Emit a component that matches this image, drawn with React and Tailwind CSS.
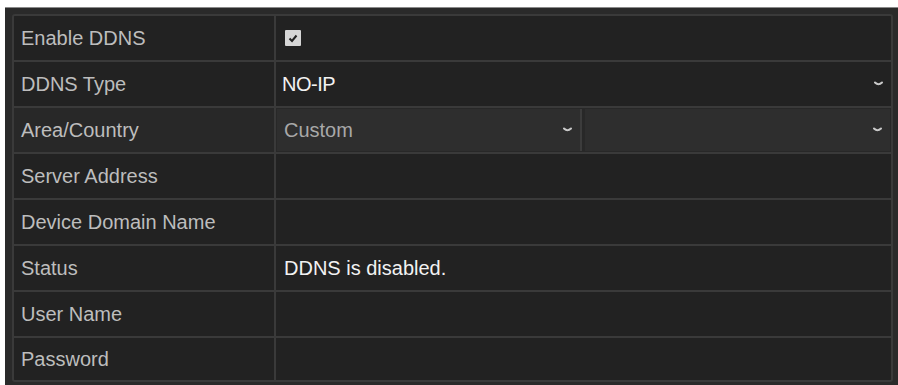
import React from "react";

function Chevron() {
    return (
        <svg width="9" height="6" viewBox="0 0 9 6" className="shrink-0">
            <path d="M1 1.5 Q4.5 5 8 1.5" stroke="#c8c8c8" strokeWidth="2" fill="none" strokeLinecap="round" />
        </svg>
    );
}

function Row({ label, children, last, shade }) {
    return (
        <div
            className={`flex ${last ? "h-[42px]" : "h-[46px] border-b-2 border-[#3a3a3a]"} ${shade ? "bg-[#282828]" : "bg-[#222222]"}`}
        >
            <div className="w-[262px] shrink-0 border-r-2 border-[#3a3a3a] flex items-center pl-[7px] text-[#bdbdbd]">
                {label}
            </div>
            <div className="flex-1 flex items-center">{children}</div>
        </div>
    );
}

export default function App() {
    return (
        <div
            className="w-[898px] h-[385px] bg-white pt-[7px] pl-[5px] overflow-hidden"
            style={{ fontFamily: '"Liberation Sans", Arial, sans-serif' }}
        >
            <div className="h-full bg-[#2a2a2a] border-t border-[#8a8a8a] pt-[6px] pl-[7px] pr-[5px]">
                <div className="border-2 border-[#3a3a3a] rounded-[3px] overflow-hidden text-[20px] leading-none">
                    <Row label="Enable DDNS">
                        <div className="ml-[9px] w-[16px] h-[16px] bg-[#d6d6d6] rounded-[1px] flex items-center justify-center">
                            <svg width="10" height="9" viewBox="0 0 10 9">
                                <path d="M1.5 4.5 L4 7 L8.5 1.5" stroke="#222" strokeWidth="2" fill="none" />
                            </svg>
                        </div>
                    </Row>
                    <Row label="DDNS Type">
                        <div className="flex-1 flex items-center justify-between pl-[6px] pr-[8px] text-[#f2f2f2]">
                            <span className="tracking-[-0.5px]">NO-IP</span>
                            <Chevron />
                        </div>
                    </Row>
                    <Row label="Area/Country" shade>
                        <div className="flex-1 h-full flex gap-[3px] py-[1px] pl-[1px] pr-[1px]">
                            <div className="w-[305px] h-full bg-[#2e2e2e] border-r-2 border-[#3c3c3c] flex items-center justify-between pl-[7px] pr-[8px] text-[#a8a8a8]">
                                <span>Custom</span>
                                <Chevron />
                            </div>
                            <div className="flex-1 h-full bg-[#2e2e2e] flex items-center justify-end pr-[8px]">
                                <Chevron />
                            </div>
                        </div>
                    </Row>
                    <Row label="Server Address" />
                    <Row label="Device Domain Name" />
                    <Row label="Status">
                        <span className="ml-[8px] text-[#f2f2f2]">DDNS is disabled.</span>
                    </Row>
                    <Row label="User Name" />
                    <Row label="Password" last />
                </div>
            </div>
        </div>
    );
}
